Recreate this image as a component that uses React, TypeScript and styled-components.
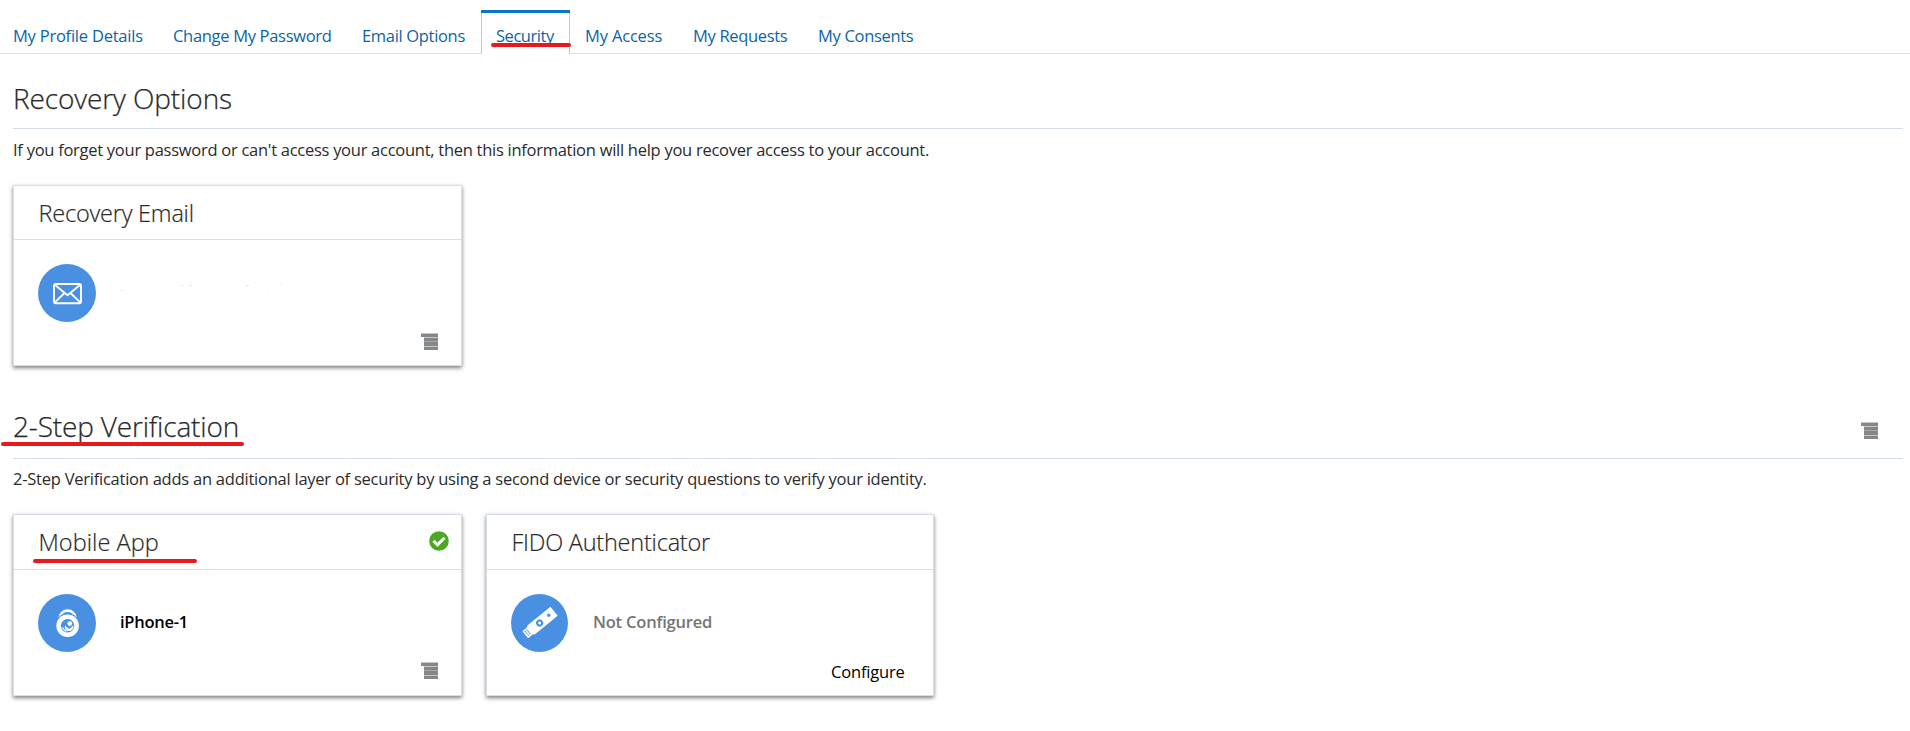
import React from "react";
import styled, { createGlobalStyle } from "styled-components";

const GlobalStyle = createGlobalStyle`
  * { box-sizing: border-box; }
  body {
    margin: 0;
    background: #fff;
    color: #2b2b2b;
    font-family: "Open Sans", "Noto Sans", sans-serif;
    font-size: 16.5px;
    overflow: hidden;
  }
`;

const Page = styled.div`
  min-height: 731px;
`;

const TabBar = styled.nav`
  display: flex;
  height: 54px;
  padding-top: 10px;
  border-bottom: 1px solid #dfe1e2;
`;

const Tab = styled.a<{ $width: number; $spacing: number; $pad: number; $active?: boolean }>`
  position: relative;
  width: ${(p) => p.$width}px;
  height: 44px;
  padding: 12px 0 0 ${(p) => p.$pad}px;
  border-top: 3px solid ${(p) => (p.$active ? "#0879c8" : "transparent")};
  background: ${(p) => (p.$active ? "#fff" : "transparent")};
  box-shadow: ${(p) => (p.$active ? "inset 1px 0 #c4c8ca, inset -1px 0 #c4c8ca" : "none")};
  color: #0b66a5;
  line-height: 22px;
  letter-spacing: ${(p) => p.$spacing}px;
  white-space: nowrap;
  text-decoration: none;
`;

const Marker = styled.span<{ $left: number; $top: number; $width: number }>`
  position: absolute;
  left: ${(p) => p.$left}px;
  top: ${(p) => p.$top}px;
  width: ${(p) => p.$width}px;
  height: 4px;
  border-radius: 2px;
  background: #e8191c;
`;

const Section = styled.section<{ $gap: number }>`
  padding: ${(p) => p.$gap}px 7px 0 13px;
`;

const SectionHead = styled.header`
  position: relative;
  display: flex;
  justify-content: space-between;
  height: 56px;
  padding-right: 25px;
  border-bottom: 1px solid #d3dee8;
`;

const SectionTitle = styled.h1<{ $spacing: number; $top: number }>`
  margin: 0;
  padding-top: ${(p) => p.$top}px;
  font-size: 28px;
  font-weight: 340;
  -webkit-text-stroke: 0.25px #2b2b2b;
  line-height: 38px;
  letter-spacing: ${(p) => p.$spacing}px;
`;

const HeadAction = styled.div`
  padding-top: 19px;
  line-height: 0;
`;

const Intro = styled.p<{ $spacing: number; $top: number }>`
  margin: ${(p) => p.$top}px 0 23px;
  line-height: 24px;
  letter-spacing: ${(p) => p.$spacing}px;
`;

const Cards = styled.div`
  display: flex;
  gap: 24px;
`;

const Card = styled.article<{ $height: number; $width: number }>`
  display: flex;
  flex-direction: column;
  width: ${(p) => p.$width}px;
  height: ${(p) => p.$height}px;
  border: 1px solid #d6dfe7;
  background: #fff;
  box-shadow: 0 2px 4px rgba(0, 0, 0, 0.5);
`;

const CardHead = styled.header<{ $height: number }>`
  position: relative;
  display: flex;
  justify-content: space-between;
  height: ${(p) => p.$height}px;
  padding: 10px 12px 0 24.5px;
  border-bottom: 1px solid #d6dfe7;
`;

const CardTitle = styled.h2<{ $spacing: number }>`
  margin: 0;
  font-size: 23.5px;
  font-weight: 340;
  -webkit-text-stroke: 0.2px #2b2b2b;
  line-height: 34px;
  letter-spacing: ${(p) => p.$spacing}px;
`;

const Check = styled.svg`
  margin-top: 6px;
`;

const CardBody = styled.div`
  display: flex;
  align-items: center;
  height: 58px;
  margin-top: 24px;
  padding-left: 24px;
`;

const Avatar = styled.svg`
  flex: none;
  margin-right: 24px;
`;

const Device = styled.strong<{ $muted?: boolean; $spacing: number }>`
  padding-bottom: 3px;
  color: ${(p) => (p.$muted ? "#757575" : "#000")};
  font-weight: 600;
  line-height: 24px;
  letter-spacing: ${(p) => p.$spacing}px;
`;

const CardFoot = styled.footer<{ $right: number; $bottom: number }>`
  display: flex;
  justify-content: flex-end;
  margin-top: auto;
  padding: 0 ${(p) => p.$right}px ${(p) => p.$bottom}px 0;
`;

const ConfigureButton = styled.button`
  padding: 0;
  border: 0;
  background: none;
  color: #000;
  font: inherit;
  line-height: 24px;
  letter-spacing: -0.2px;
`;

const MenuIcon = () => (
  <svg width="17" height="17" viewBox="0 0 17 17" shapeRendering="crispEdges">
    <path fill="#c5c7c8" d="M0 0h17v1H0zM3 4h14v13H3z" />
    <path fill="#85888a" d="M0 1h17v3H0zM3 5h14v3H3zM3 9h14v4H3zM3 14h14v3H3z" />
    <path fill="#a4a6a8" d="M3 8h14v1H3z" />
  </svg>
);

const MailAvatar = () => (
  <Avatar width="58" height="58" viewBox="0 0 58 58">
    <circle cx="29" cy="29" r="29" fill="#4a90e2" />
    <g fill="none" stroke="#fff" strokeWidth="1.9" strokeLinejoin="round">
      <rect x="16" y="20" width="27" height="19.2" rx="1.8" />
      <path d="M16.8 20.8 29.5 31.2 42.2 20.8M16.8 38.4 26 29.5M42.2 38.4 33 29.5" />
    </g>
  </Avatar>
);

const LockAvatar = () => (
  <Avatar width="58" height="58" viewBox="0 0 58 58">
    <circle cx="29" cy="29" r="29" fill="#4a90e2" />
    <path d="M21.8 23.5a7.9 8.2 0 0 1 15.6 0" fill="none" stroke="#fff" strokeWidth="2.8" />
    <circle cx="29.6" cy="31.7" r="12.4" fill="#4a90e2" />
    <circle cx="29.6" cy="31.7" r="11.3" fill="#fff" />
    <circle cx="29.6" cy="31.7" r="6.7" fill="#4a90e2" />
    <circle cx="31.8" cy="29.6" r="2.4" fill="#fff" />
    <path d="M27 31.5l4.2 3.5 4.2-3.6c.5 3.3-2 5.6-4.7 5.6s-4.3-2.4-3.7-5.5z" fill="#fff" />
    <path d="M24.5 33.3q1.2 3 4 4.1" fill="none" stroke="#fff" strokeWidth="1.1" />
  </Avatar>
);

const KeyAvatar = () => (
  <Avatar width="58" height="58" viewBox="0 0 58 58">
    <ellipse cx="28.5" cy="29" rx="28.5" ry="29" fill="#4a90e2" />
    <g transform="translate(28.6 29) rotate(-39)">
      <path d="M-11-5.8H18.6V5.8H-11L-12.5 4.3V-4.3z" fill="#fff" />
      <path d="M-18.5-4.5H-12V4.5H-18.5z" fill="#fff" />
      <path d="M-16.5-3.2V3.2M-14.2-3.4V3.4" stroke="#4a90e2" strokeWidth="1.1" strokeDasharray="1.6 .7" />
      <circle r="2.5" fill="none" stroke="#4a90e2" strokeWidth="2.1" />
      <circle cx="12" cy="-.2" r="1.7" fill="#4a90e2" />
    </g>
  </Avatar>
);

/* Faint traces left where the e-mail address is blanked out. */
const BlankedAddress = () => (
  <svg width="170" height="18" viewBox="0 0 170 18">
    <path
      fill="#e6e6e2"
      d="M1 6h2v1H1zM61 1h2v1h-2zM69 1h3v1h-3zM126 1h3v1h-3zM147 6h1v1h-1zM161 0h1v1h-1z"
    />
  </svg>
);

const tabs = [
  { label: "My Profile Details", width: 160, pad: 13, spacing: -0.23 },
  { label: "Change My Password", width: 189, pad: 13, spacing: -0.31 },
  { label: "Email Options", width: 132, pad: 13, spacing: -0.32 },
  { label: "Security", width: 89, pad: 15, spacing: -0.45, active: true },
  { label: "My Access", width: 108, pad: 15, spacing: -0.17 },
  { label: "My Requests", width: 125, pad: 15, spacing: -0.33 },
  { label: "My Consents", width: 124, pad: 15, spacing: -0.31 },
];

export default function App() {
  return (
    <Page>
      <GlobalStyle />
      <TabBar>
        {tabs.map((t) => (
          <Tab key={t.label} $width={t.width} $pad={t.pad} $spacing={t.spacing} $active={t.active}>
            {t.label}
            {t.active && <Marker $left={10} $top={30} $width={80} />}
          </Tab>
        ))}
      </TabBar>

      <Section $gap={19}>
        <SectionHead>
          <SectionTitle $spacing={-0.11} $top={6}>Recovery Options</SectionTitle>
        </SectionHead>
        <Intro $spacing={-0.27} $top={9}>
          If you forget your password or can't access your account, then this information will help you recover
          access to your account.
        </Intro>
        <Cards>
          <Card $height={181} $width={449}>
            <CardHead $height={54}>
              <CardTitle $spacing={-0.22}>Recovery Email</CardTitle>
            </CardHead>
            <CardBody>
              <MailAvatar />
              <BlankedAddress />
            </CardBody>
            <CardFoot $right={23} $bottom={15}>
              <MenuIcon />
            </CardFoot>
          </Card>
        </Cards>
      </Section>

      <Section $gap={37}>
        <SectionHead>
          <SectionTitle $spacing={-0.17} $top={4}>2-Step Verification</SectionTitle>
          <HeadAction>
            <MenuIcon />
          </HeadAction>
          <Marker $left={-12} $top={39} $width={243} />
        </SectionHead>
        <Intro $spacing={-0.24} $top={8}>
          2-Step Verification adds an additional layer of security by using a second device or security questions to
          verify your identity.
        </Intro>
        <Cards>
          <Card $height={182} $width={449}>
            <CardHead $height={55}>
              <CardTitle $spacing={0.05}>Mobile App</CardTitle>
              <Check width="20" height="20" viewBox="0 0 20 20">
                <circle cx="10" cy="10" r="9.8" fill="#4aa823" />
                <path d="M4.5 9.8l4 4 7-7" fill="none" stroke="#fff" strokeWidth="3" />
              </Check>
              <Marker $left={19} $top={44} $width={164} />
            </CardHead>
            <CardBody>
              <LockAvatar />
              <Device $spacing={-0.25}>iPhone-1</Device>
            </CardBody>
            <CardFoot $right={23} $bottom={16}>
              <MenuIcon />
            </CardFoot>
          </Card>
          <Card $height={182} $width={448}>
            <CardHead $height={55}>
              <CardTitle $spacing={-0.22}>FIDO Authenticator</CardTitle>
            </CardHead>
            <CardBody>
              <KeyAvatar />
              <Device $muted $spacing={-0.2}>Not Configured</Device>
            </CardBody>
            <CardFoot $right={28.5} $bottom={11}>
              <ConfigureButton>Configure</ConfigureButton>
            </CardFoot>
          </Card>
        </Cards>
      </Section>
    </Page>
  );
}
